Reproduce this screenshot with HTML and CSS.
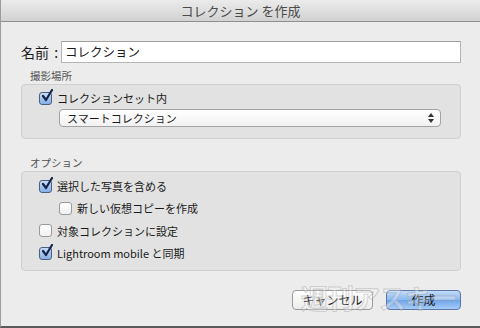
FILE: index.html
```html
<!DOCTYPE html>
<html lang="ja">
<head>
    <meta charset="UTF-8">
    <title>コレクション を作成</title>
    <link rel="stylesheet" href="styles.css">
</head>
<body>
    <div class="window">
        <div class="titlebar">コレクション を作成</div>
        <div class="content">
            <div class="name-row">
                <label class="name-label">名前 :</label>
                <div class="text-field">コレクション</div>
            </div>

            <div class="section-label">撮影場所</div>
            <div class="group group-place">
                <div class="check-row">
                    <span class="box checked"><svg viewBox="0 0 14 14" width="14" height="14"><path d="M3 7 L6 11 L12 1" fill="none" stroke="#16254a" stroke-width="2.2" stroke-linecap="round" stroke-linejoin="round"/></svg></span>
                    <span>コレクションセット内</span>
                </div>
                <div class="popup">
                    <span>スマートコレクション</span>
                    <svg class="arrows" viewBox="0 0 6 10" width="6" height="10"><path d="M3 0 L6 4 L0 4 Z M0 6 L6 6 L3 10 Z" fill="#333"/></svg>
                </div>
            </div>

            <div class="section-label">オプション</div>
            <div class="group group-options">
                <div class="check-row">
                    <span class="box checked"><svg viewBox="0 0 14 14" width="14" height="14"><path d="M3 7 L6 11 L12 1" fill="none" stroke="#16254a" stroke-width="2.2" stroke-linecap="round" stroke-linejoin="round"/></svg></span>
                    <span>選択した写真を含める</span>
                </div>
                <div class="check-row indent">
                    <span class="box"></span>
                    <span>新しい仮想コピーを作成</span>
                </div>
                <div class="check-row">
                    <span class="box"></span>
                    <span>対象コレクションに設定</span>
                </div>
                <div class="check-row">
                    <span class="box checked"><svg viewBox="0 0 14 14" width="14" height="14"><path d="M3 7 L6 11 L12 1" fill="none" stroke="#16254a" stroke-width="2.2" stroke-linecap="round" stroke-linejoin="round"/></svg></span>
                    <span>Lightroom mobile と同期</span>
                </div>
            </div>

            <div class="buttons">
                <button class="btn">キャンセル</button>
                <button class="btn primary">作成</button>
            </div>
        </div>
        <div class="watermark">週刊アスキー</div>
    </div>
</body>
</html>
```

FILE: styles.css
```css
body {
    margin: 0;
    font-family: "Noto Sans CJK JP", "Noto Sans", sans-serif;
    color: #1a1a1a;
    background: #ececec;
}
.window {
    position: relative;
    width: 480px;
    height: 328px;
    box-sizing: border-box;
    background: #ececec;
    border-left: 1px solid #9c9c9c;
    border-bottom: 2px solid #5a5a5a;
    overflow: hidden;
}
.titlebar {
    height: 21px;
    line-height: 21px;
    text-align: center;
    font-size: 13px;
    color: #4a4a4a;
    background: linear-gradient(#ebebeb, #d2d2d2);
    border-bottom: 1px solid #8f8f8f;
}
.content {
    padding: 19px 19px 0 20px;
}
.name-row {
    display: flex;
    align-items: center;
    height: 22px;
}
.name-label {
    width: 40px;
    flex-shrink: 0;
    white-space: nowrap;
    font-size: 14px;
    line-height: 22px;
    word-spacing: 2px;
}
.text-field {
    flex: 1;
    height: 20px;
    line-height: 20px;
    padding-left: 3px;
    font-size: 12.5px;
    background: #fff;
    border: 1px solid #b5b5b5;
    border-top-color: #a0a0a0;
}
.section-label {
    font-size: 10.5px;
    color: #555;
    padding-left: 9px;
    margin-top: 5px;
    height: 16px;
    line-height: 16px;
}
.group {
    background: #e2e2e2;
    border: 1px solid #cfcfcf;
    border-radius: 4px;
    padding-left: 17px;
    box-sizing: border-box;
}
.group-place {
    height: 55px;
    padding-top: 2px;
    margin-bottom: 16px;
}
.group-options {
    height: 100px;
    padding-top: 3px;
}
.check-row {
    display: flex;
    align-items: center;
    gap: 5px;
    height: 22.3px;
    font-size: 11px;
    line-height: 14px;
}
.check-row.indent {
    padding-left: 20px;
}
.box {
    position: relative;
    width: 11px;
    height: 11px;
    border: 1px solid #9a9a9a;
    border-radius: 3px;
    background: linear-gradient(#ffffff, #f0f0f0);
    flex-shrink: 0;
}
.box.checked {
    background: linear-gradient(#c9dcf6, #86aee6);
    border-color: #4d5f80;
}
.box svg {
    position: absolute;
    left: 0;
    top: -4px;
}
.popup {
    display: flex;
    align-items: center;
    justify-content: space-between;
    margin: 0 19px 0 20px;
    height: 16px;
    padding: 0 6px 0 7px;
    font-size: 11px;
    line-height: 16px;
    background: linear-gradient(#ffffff, #f2f2f2);
    border: 1px solid #a3a3a3;
    border-radius: 4px;
}
.arrows {
    display: block;
}
.buttons {
    display: flex;
    justify-content: flex-end;
    gap: 13px;
    margin-top: 19px;
}
.btn {
    height: 20px;
    padding: 0;
    font-family: inherit;
    font-size: 12px;
    line-height: 18px;
    color: #1a1a1a;
    border-radius: 4px;
    border: 1px solid #9b9b9b;
    background: linear-gradient(#ffffff, #ececec);
}
.btn:first-child {
    width: 81px;
}
.btn.primary {
    width: 75px;
    border-color: #5b77a8;
    background: linear-gradient(#c3dbf8, #8ab8f0 50%, #6fa5ea 51%, #a6cbf6);
}
.watermark {
    position: absolute;
    left: 300px;
    top: 282px;
    font-size: 27px;
    line-height: 32px;
    font-weight: bold;
    color: rgba(255, 255, 255, 0.3);
    -webkit-text-stroke: 1px rgba(150, 150, 150, 0.4);
    letter-spacing: -1px;
    pointer-events: none;
}
```
